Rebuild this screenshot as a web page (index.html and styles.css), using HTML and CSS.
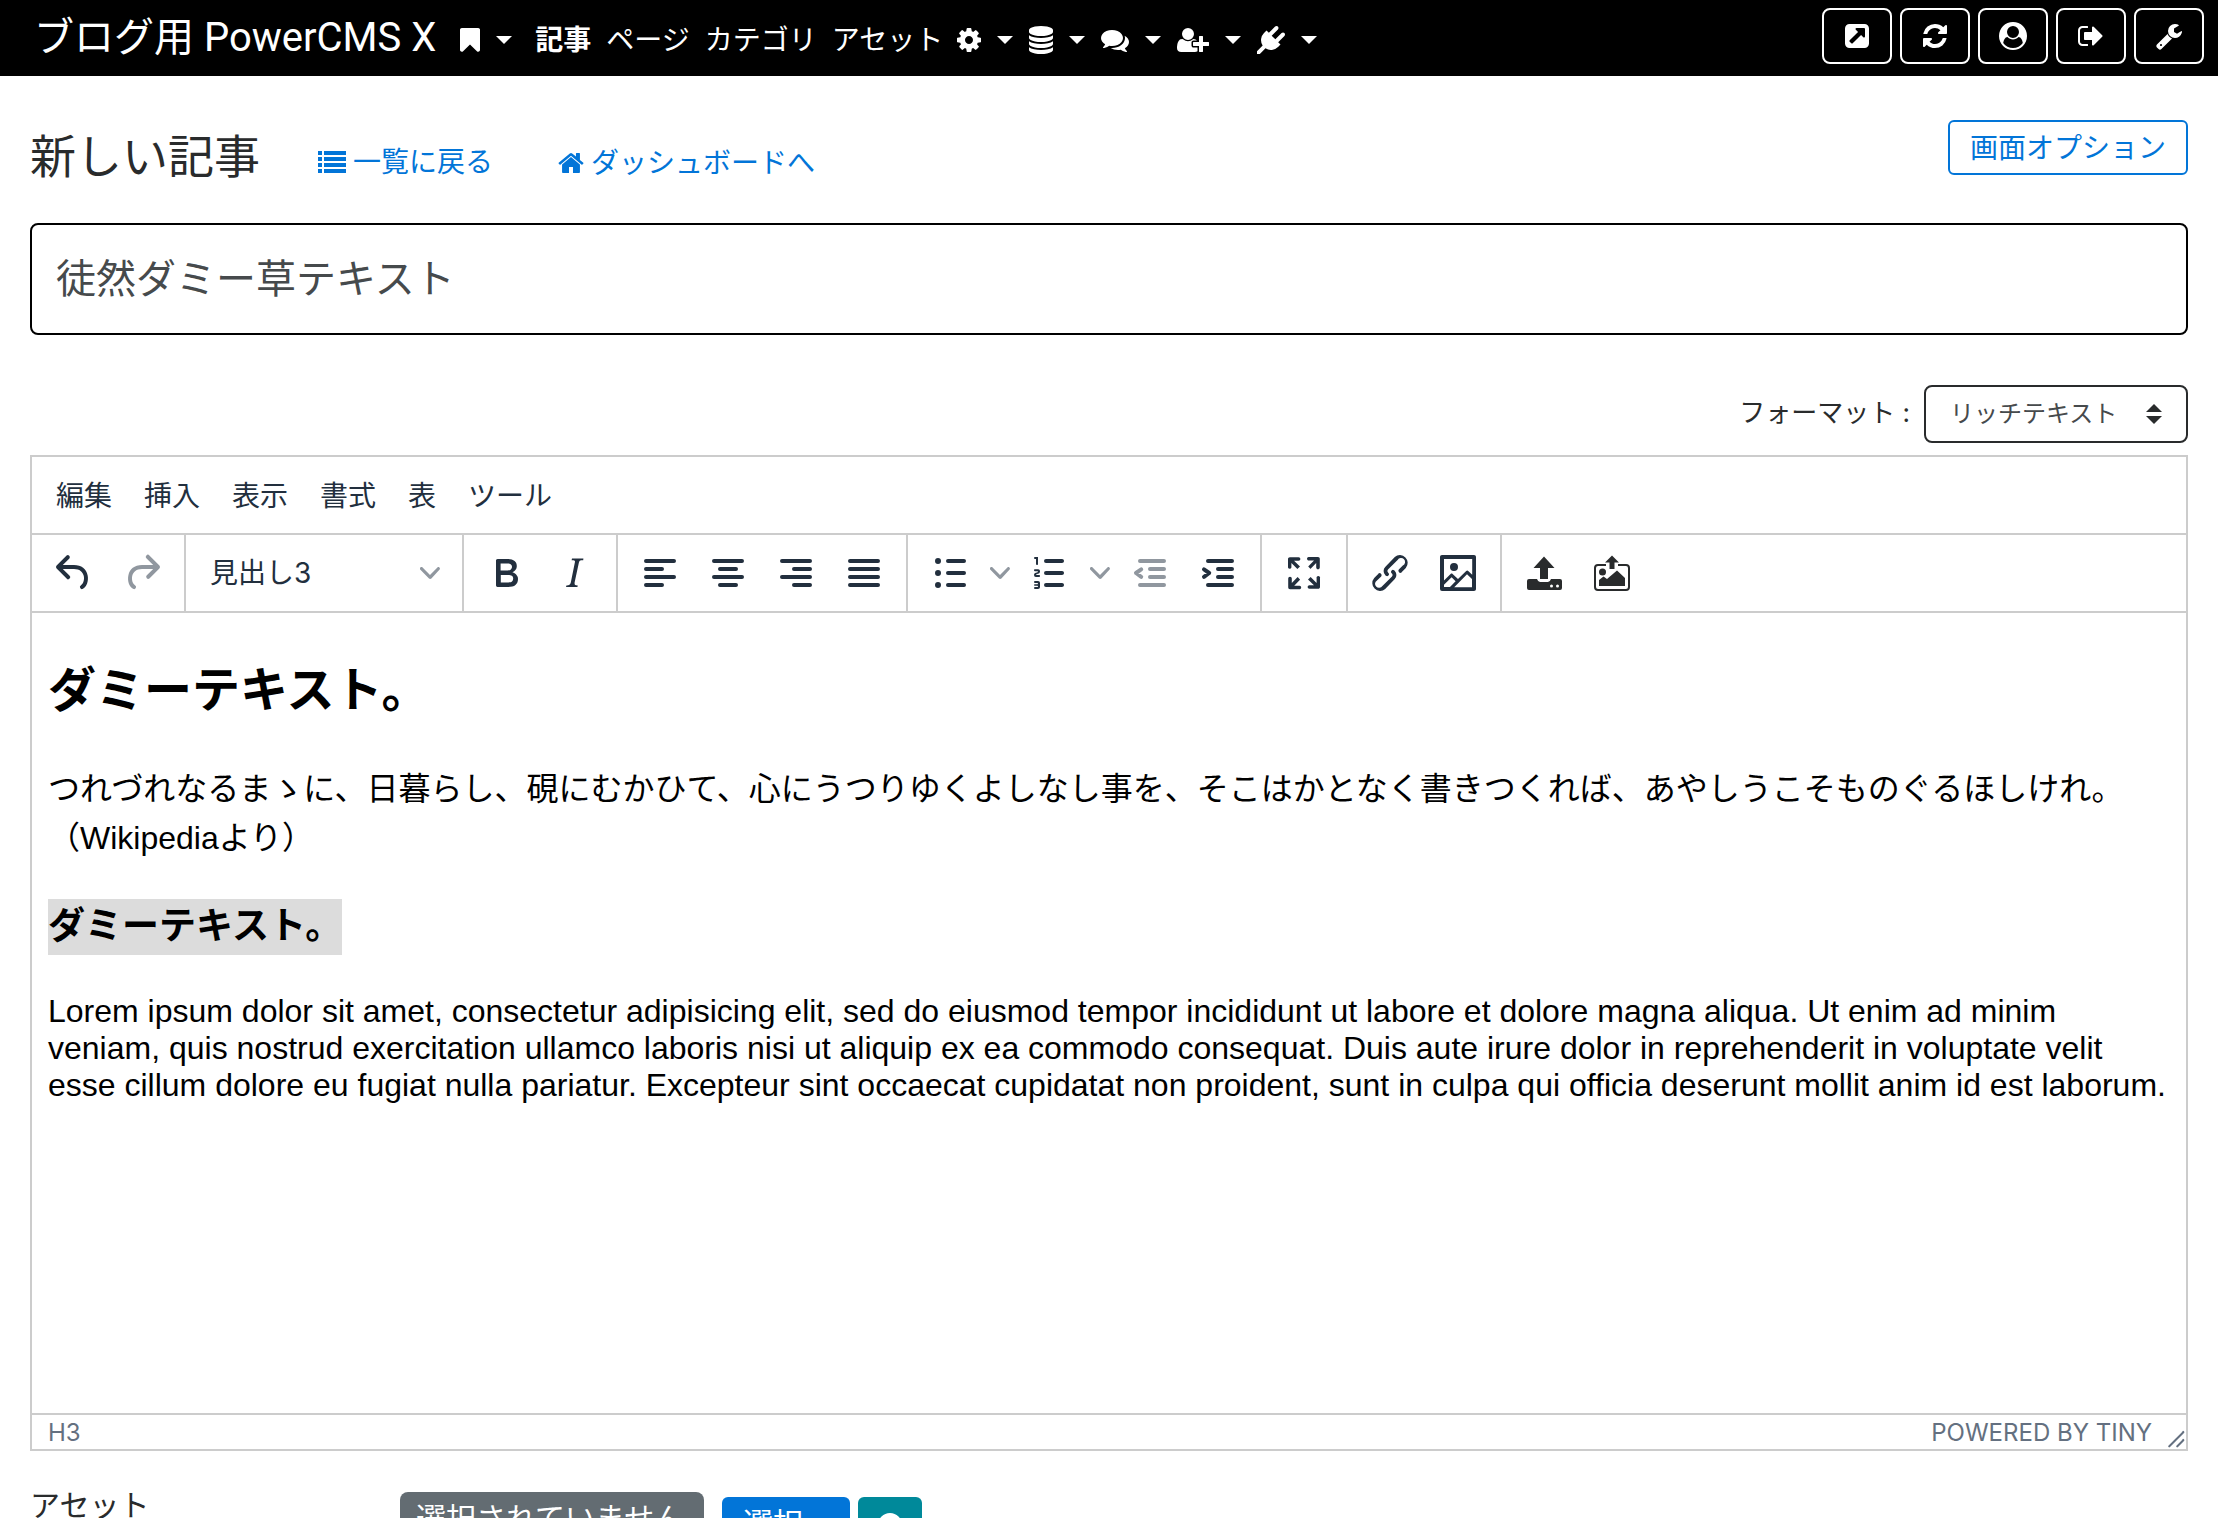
FILE: index.html
```html
<!DOCTYPE html>
<html lang="ja">
<head>
<meta charset="utf-8">
<meta name="viewport" content="width=device-width, initial-scale=1">
<title>新しい記事 - ブログ用 PowerCMS X</title>
<link rel="stylesheet" href="styles.css">
</head>
<body>
<header class="navbar">
  <a class="brand" href="#">ブログ用 PowerCMS X</a>
  <nav class="nav" aria-label="メインメニュー">
    <button class="nav-menu" type="button" aria-label="ブックマーク"><svg class="fa fa-narrow" viewBox="256 0 1280 1792"><path d="M1420 128q23 0 44 9 33 13 52.5 41t19.5 62v1289q0 34-19.5 62t-52.5 41q-19 8-44 8-48 0-83-32l-441-424-441 424q-36 33-83 33-23 0-44-9-33-13-52.5-41t-19.5-62v-1289q0-34 19.5-62t52.5-41q21-9 44-9h1048z"/></svg><span class="caret"></span></button>
    <div class="nav-links">
      <a class="nav-link active" href="#">記事</a>
      <a class="nav-link" href="#">ページ</a>
      <a class="nav-link" href="#">カテゴリ</a>
      <a class="nav-link" href="#">アセット</a>
    </div>
    <button class="nav-menu" type="button" aria-label="設定"><svg class="fa fa-mid" viewBox="128 0 1536 1792"><path d="M1152 896q0-106-75-181t-181-75-181 75-75 181 75 181 181 75 181-75 75-181zm512-109v222q0 12-8 23t-20 13l-185 28q-19 54-39 91 35 50 107 138 10 12 10 25t-9 23q-27 37-99 108t-94 71q-12 0-26-9l-138-108q-44 23-91 38-16 136-29 186-7 28-36 28h-222q-14 0-24.5-8.5t-11.5-21.5l-28-184q-49-16-90-37l-141 107q-10 9-25 9-14 0-25-11-126-114-165-168-7-10-7-23 0-12 8-23 15-21 51-66.5t54-70.5q-27-50-41-99l-183-27q-13-2-21-12.5t-8-23.5v-222q0-12 8-23t19-13l186-28q14-46 39-92-40-57-107-138-10-12-10-24 0-10 9-23 26-36 98.5-107.5t94.5-71.5q13 0 26 10l138 107q44-23 91-38 16-136 29-186 7-28 36-28h222q14 0 24.5 8.5t11.5 21.5l28 184q49 16 90 37l142-107q9-9 24-9 13 0 25 10 129 119 165 170 7 8 7 22 0 12-8 23-15 21-51 66.5t-54 70.5q26 50 41 98l183 28q13 2 21 12.5t8 23.5z"/></svg><span class="caret"></span></button>
    <button class="nav-menu" type="button" aria-label="データベース"><svg class="fa fa-mid" viewBox="128 0 1536 1792"><path d="M896 768q237 0 443-43t325-127v170q0 69-103 128t-280 93.500-385 34.500-385-34.500-280-93.500-103-128v-170q119 84 325 127t443 43zm0 768q237 0 443-43t325-127v170q0 69-103 128t-280 93.500-385 34.500-385-34.500-280-93.500-103-128v-170q119 84 325 127t443 43zm0-384q237 0 443-43t325-127v170q0 69-103 128t-280 93.500-385 34.500-385-34.500-280-93.500-103-128v-170q119 84 325 127t443 43zm0-1152q208 0 385 34.500t280 93.500 103 128v128q0 69-103 128t-280 93.500-385 34.500-385-34.500-280-93.500-103-128v-128q0-69 103-128t280-93.500 385-34.500z"/></svg><span class="caret"></span></button>
    <button class="nav-menu" type="button" aria-label="コミュニケーション"><svg class="fa" viewBox="0 0 1792 1792"><path d="M1408 768q0 139-94 257t-256.500 186.500-353.500 68.500q-86 0-176-16-124 88-278 128-36 9-86 16h-3q-11 0-20.500-8t-11.500-21q-1-3-1-6.500t.5-6.500 2-6l2.500-5 3.500-5.500 4-5 4.500-5 4-4.500q5-6 23-25t26-29.500 22.500-29 25-38.500 20.500-44q-124-72-195-177t-71-224q0-139 94-257t256.500-186.500 353.500-68.500 353.500 68.500 256.500 186.500 94 257zm384 256q0 120-71 224.500t-195 176.500q10 24 20.500 44t25 38.500 22.500 29 26 29.500 23 25q1 1 4 4.500t4.500 5 4 5 3.500 5.500l2.500 5 2 6 .5 6.500-1 6.500q-3 14-13 22t-22 7q-50-7-86-16-154-40-278-128-90 16-176 16-271 0-472-132 58 4 88 4 161 0 309-45t264-129q125-92 192-212t67-254q0-77-23-152 129 71 204 178t75 230z"/></svg><span class="caret"></span></button>
    <button class="nav-menu" type="button" aria-label="ユーザー"><svg class="fa fa-wide" viewBox="0 0 2048 1792"><path d="M704 896q-159 0-271.500-112.500t-112.500-271.500 112.500-271.500 271.500-112.500 271.500 112.500 112.500 271.500-112.500 271.500-271.500 112.500zm960 128h352q13 0 22.500 9.500t9.500 22.500v192q0 13-9.500 22.500t-22.500 9.500h-352v352q0 13-9.500 22.500t-22.500 9.500h-192q-13 0-22.500-9.500t-9.500-22.500v-352h-352q-13 0-22.500-9.500t-9.500-22.500v-192q0-13 9.500-22.500t22.500-9.500h352v-352q0-13 9.500-22.500t22.500-9.500h192q13 0 22.500 9.500t9.500 22.500v352zm-736 224q0 52 38 90t90 38h256v238q-68 50-171 50h-874q-121 0-194-69t-73-190q0-53 3.500-103.500t14-109 26.500-108.500 43-97.500 62-81 85.500-53.500 111.500-20q19 0 39 17 79 61 154.500 91.500t164.500 30.500 164.500-30.500 154.500-91.500q20-17 39-17 132 0 217 96h-223q-52 0-90 38t-38 90v192z"/></svg><span class="caret"></span></button>
    <button class="nav-menu" type="button" aria-label="プラグイン"><svg class="fa" viewBox="0 0 1792 1792"><path d="M1755 453q37 38 37 90.500t-37 90.500l-401 400 150 150-160 160q-163 163-389.500 186.500t-411.500-100.500l-362 362h-181v-181l362-362q-124-185-100.500-411.500t186.500-389.500l160-160 150 150 400-401q38-37 91-37t90 37 37 90.500-37 90.500l-400 401 234 234 401-400q38-37 91-37t90 37z"/></svg><span class="caret"></span></button>
  </nav>
  <div class="nav-tools">
    <button class="tool" type="button" aria-label="サイトを表示"><svg class="fa" viewBox="0 0 1792 1792"><path d="M1408 928v-480q0-26-19-45t-45-19h-480q-42 0-59 39-17 41 14 70l144 144-534 534q-19 19-19 45t19 45l102 102q19 19 45 19t45-19l534-534 144 144q18 19 45 19 12 0 25-5 39-17 39-59zm256-512v960q0 119-84.500 203.500t-203.500 84.500h-960q-119 0-203.500-84.500t-84.500-203.500v-960q0-119 84.500-203.500t203.500-84.500h960q119 0 203.500 84.500t84.500 203.500z"/></svg></button>
    <button class="tool" type="button" aria-label="再構築"><svg class="fa" viewBox="0 0 1792 1792"><path d="M1639 1056q0 5-1 7-64 268-268 434.500t-478 166.500q-146 0-282.500-55t-243.500-157l-129 129q-19 19-45 19t-45-19-19-45v-448q0-26 19-45t45-19h448q26 0 45 19t19 45-19 45l-137 137q71 66 161 102t187 36q134 0 250-65t186-179q11-17 53-117 8-23 30-23h192q13 0 22.500 9.500t9.500 22.500zm25-800v448q0 26-19 45t-45 19h-448q-26 0-45-19t-19-45 19-45l138-138q-148-137-349-137-134 0-250 65t-186 179q-11 17-53 117-8 23-30 23h-199q-13 0-22.500-9.500t-9.500-22.500v-7q65-268 270-434.500t480-166.500q146 0 284 55.500t245 156.500l130-129q19-19 45-19t45 19 19 45z"/></svg></button>
    <button class="tool" type="button" aria-label="アカウント"><svg class="fa" viewBox="0 0 1792 1792"><path d="M1523 1339q-22-155-87.500-257.500t-184.500-118.500q-67 74-159.500 115.500t-195.500 41.500-195.500-41.500-159.500-115.500q-119 16-184.500 118.500t-87.500 257.500q106 150 271 237.500t356 87.500 356-87.500 271-237.500zm-243-699q0-159-112.500-271.500t-271.500-112.500-271.500 112.500-112.500 271.500 112.500 271.500 271.500 112.500 271.500-112.500 112.500-271.500zm512 256q0 182-71 347.500t-190.500 286-285.500 191.500-349 71-349-71-285.500-191.500-190.500-286-71-347.500 71-348 191-286 286-191 348-71 348 71 286 191 191 286 71 348z"/></svg></button>
    <button class="tool" type="button" aria-label="ログアウト"><svg class="fa" viewBox="0 0 1792 1792"><path d="M704 1440q0 4 1 20t.5 26.500-3 23.500-10 19.500-20.500 6.500h-320q-119 0-203.500-84.500t-84.500-203.500v-704q0-119 84.500-203.500t203.500-84.500h320q13 0 22.500 9.500t9.500 22.500q0 4 1 20t.5 26.500-3 23.500-10 19.500-20.500 6.500h-320q-66 0-113 47t-47 113v704q0 66 47 113t113 47h312l11.500 1 11.500 3 8 5.500 7 9 2 13.500zm928-544q0 26-19 45l-544 544q-19 19-45 19t-45-19-19-45v-288h-448q-26 0-45-19t-19-45v-384q0-26 19-45t45-19h448v-288q0-26 19-45t45-19 45 19l544 544q19 19 19 45z"/></svg></button>
    <button class="tool" type="button" aria-label="ツール"><svg class="fa" viewBox="0 0 1792 1792"><path d="M448 1472q0-26-19-45t-45-19-45 19-19 45 19 45 45 19 45-19 19-45zm644-420l-682 682q-37 37-90 37-52 0-91-37l-106-108q-38-36-38-90 0-53 38-91l681-681q39 98 114.500 173.500t173.500 114.500zm634-435q0 39-23 106-47 134-164.500 217.500t-258.500 83.500q-185 0-316.500-131.500t-131.500-316.500 131.500-316.500 316.500-131.500q58 0 121.500 16.500t107.500 46.500q16 11 16 28t-16 28l-293 169v224l193 107q5-3 79-48.500t135.500-81 70.500-35.500q15 0 23.500 10t8.500 25z"/></svg></button>
  </div>
</header>

<main class="page">
  <div class="page-head">
    <div class="page-title">
      <h1>新しい記事</h1>
      <a class="head-link" href="#"><svg class="list-icon" viewBox="0 0 28 22"><path d="M0 0h4v4H0zM6 0h22v4H6zM0 6h4v4H0zM6 6h22v4H6zM0 12h4v4H0zM6 12h22v4H6zM0 18h4v4H0zM6 18h22v4H6z"/></svg>一覧に戻る</a>
      <a class="head-link" href="#"><svg class="home-icon" viewBox="90 250 1612 1290"><path d="M1472 992v480q0 26-19 45t-45 19h-384v-384h-256v384h-384q-26 0-45-19t-19-45v-480q0-1 .5-3t.5-3l575-474 575 474q1 2 1 6zm223-69l-62 74q-8 9-21 11h-3q-13 0-21-7l-692-577-692 577q-12 8-24 7-13-2-21-11l-62-74q-8-10-7-23.500t11-21.500l719-599q32-26 76-26t76 26l244 204v-195q0-14 9-23t23-9h192q14 0 23 9t9 23v408l219 182q10 8 11 21.500t-7 23.500z"/></svg>ダッシュボードへ</a>
    </div>
    <button class="btn-outline" type="button">画面オプション</button>
  </div>

  <input class="title-input" type="text" aria-label="タイトル" value="徒然ダミー草テキスト">

  <div class="format-row">
    <label for="format">フォーマット :</label>
    <div class="format-select">
      <select id="format"><option>リッチテキスト</option></select>
      <svg class="sort-icon" viewBox="0 0 16 20"><path d="M8 0l8 8H0zM8 20l8-8H0z"/></svg>
    </div>
  </div>

  <section class="editor" aria-label="本文">
    <div class="menubar" role="menubar">
      <button type="button">編集</button>
      <button type="button">挿入</button>
      <button type="button">表示</button>
      <button type="button">書式</button>
      <button type="button">表</button>
      <button type="button">ツール</button>
    </div>
    <div class="toolbar" role="toolbar">
      <div class="group">
        <button class="tb" type="button" aria-label="元に戻す"><svg viewBox="0 0 24 24"><path d="M6.400 8H12c3.700 0 6.200 2 6.800 5.100.6 2.700-.4 5.600-2.300 6.800a1 1 0 0 1-1-1.800c1.100-.6 1.800-2.700 1.400-4.600-.5-2.100-2.100-3.500-4.900-3.500H6.400l3.300 3.300a1 1 0 1 1-1.400 1.400l-5-5a1 1 0 0 1 0-1.400l5-5a1 1 0 0 1 1.400 1.400L6.400 8Z"/></svg></button>
        <button class="tb" type="button" aria-label="やり直す" disabled><svg viewBox="0 0 24 24"><path d="M17.600 10H12c-2.800 0-4.400 1.400-4.900 3.500-.4 2 .3 4 1.400 4.600a1 1 0 1 1-1 1.800c-2-1.200-2.900-4.100-2.300-6.800.6-3 3-5.100 6.800-5.100h5.600l-3.300-3.300a1 1 0 1 1 1.400-1.400l5 5a1 1 0 0 1 0 1.400l-5 5a1 1 0 0 1-1.400-1.400l3.300-3.300Z"/></svg></button>
      </div>
      <div class="group">
        <div class="block-select">
          <select aria-label="ブロック"><option>見出し3</option></select>
          <svg class="chevron" viewBox="0 0 10 10"><path d="M8.700 2.200c.3-.3.8-.3 1 0 .4.4.4.9 0 1.200L5.700 7.800c-.3.3-.9.3-1.200 0L.2 3.400a.8.8 0 0 1 0-1.200c.3-.3.8-.3 1.100 0L5 6l3.700-3.800Z"/></svg>
        </div>
      </div>
      <div class="group">
        <button class="tb" type="button" aria-label="太字"><svg viewBox="0 0 24 24"><path d="M7.800 19c-.3 0-.5 0-.6-.2l-.2-.5V5.700c0-.2 0-.4.2-.5l.6-.2h5c1.500 0 2.700.3 3.500 1 .7.6 1.100 1.400 1.100 2.500a3 3 0 0 1-.6 1.900c-.4.6-1 1-1.600 1.200.4.1.9.3 1.300.6s.8.7 1 1.200c.4.4.5 1 .5 1.600 0 1.300-.4 2.300-1.300 3-.8.7-2.100 1-3.800 1H7.800Zm5-8.300c.6 0 1.200-.1 1.600-.5.4-.3.6-.7.6-1.300 0-1.100-.8-1.700-2.300-1.700H9.300v3.500h3.400Zm.5 6c.7 0 1.300-.1 1.700-.4.4-.4.6-.9.6-1.500s-.2-1-.7-1.400c-.4-.3-1-.4-2-.4H9.400v3.800h4Z"/></svg></button>
        <button class="tb" type="button" aria-label="斜体"><svg viewBox="0 0 24 24"><path d="m16.700 4.700-.1.9h-.3c-.6 0-1 0-1.400.3-.3.3-.4.6-.5 1.100l-2.100 9.800v.6c0 .5.4.8 1.400.8h.2l-.2.8H8l.2-.8h.2c1.100 0 1.800-.5 2-1.500l2-9.800.1-.5c0-.6-.4-.8-1.400-.8h-.3l.2-.9h5.800Z"/></svg></button>
      </div>
      <div class="group">
        <button class="tb" type="button" aria-label="左揃え"><svg class="lines" viewBox="0 0 24 24"><path d="M5 6h14M5 10h8M5 14h14M5 18h8"/></svg></button>
        <button class="tb" type="button" aria-label="中央揃え"><svg class="lines" viewBox="0 0 24 24"><path d="M5 6h14M8 10h8M5 14h14M8 18h8"/></svg></button>
        <button class="tb" type="button" aria-label="右揃え"><svg class="lines" viewBox="0 0 24 24"><path d="M5 6h14M11 10h8M5 14h14M11 18h8"/></svg></button>
        <button class="tb" type="button" aria-label="両端揃え"><svg class="lines" viewBox="0 0 24 24"><path d="M5 6h14M5 10h14M5 14h14M5 18h14"/></svg></button>
      </div>
      <div class="group">
        <button class="tb" type="button" aria-label="箇条書き"><svg class="lines" viewBox="0 0 24 24"><path d="M11 6h8M11 12h8M11 18h8"/><path class="dots" d="M6 6h0M6 12h0M6 18h0"/></svg></button>
        <button class="tb-chevron" type="button" aria-label="箇条書きの種類"><svg class="chevron" viewBox="0 0 10 10"><path d="M8.700 2.200c.3-.3.8-.3 1 0 .4.4.4.9 0 1.200L5.700 7.800c-.3.3-.9.3-1.200 0L.2 3.400a.8.8 0 0 1 0-1.200c.3-.3.8-.3 1.100 0L5 6l3.700-3.800Z"/></svg></button>
        <button class="tb" type="button" aria-label="番号付き箇条書き"><svg viewBox="0 0 24 24"><path d="M10 17h8c.6 0 1 .4 1 1s-.4 1-1 1h-8a1 1 0 0 1 0-2Zm0-6h8c.6 0 1 .4 1 1s-.4 1-1 1h-8a1 1 0 0 1 0-2Zm0-6h8c.6 0 1 .4 1 1s-.4 1-1 1h-8a1 1 0 1 1 0-2ZM6 4v3.500c0 .3-.2.5-.5.5a.5.5 0 0 1-.5-.5V5h-.5a.5.5 0 0 1 0-1H6Zm-1 8.800.2.2h1.300c.3 0 .5.2.5.5s-.2.5-.5.5H4.900a1 1 0 0 1-.9-1V13c0-.4.3-.8.6-1l1.200-.4.2-.3a.2.2 0 0 0-.2-.2H4.500a.5.5 0 0 1-.5-.5c0-.3.2-.5.5-.5h1.600c.5 0 .9.4.9 1v.1c0 .4-.3.8-.6 1l-1.200.4-.2.3ZM7 17v2c0 .6-.4 1-1 1H4.500a.5.5 0 0 1 0-1h1.200c.2 0 .3-.1.3-.3 0-.2-.1-.3-.3-.3H4.400a.4.4 0 1 1 0-.8h1.300c.2 0 .3-.1.3-.3 0-.2-.1-.3-.3-.3H4.500a.5.5 0 1 1 0-1H6c.6 0 1 .4 1 1Z"/></svg></button>
        <button class="tb-chevron" type="button" aria-label="番号の種類"><svg class="chevron" viewBox="0 0 10 10"><path d="M8.700 2.200c.3-.3.8-.3 1 0 .4.4.4.9 0 1.200L5.700 7.800c-.3.3-.9.3-1.200 0L.2 3.400a.8.8 0 0 1 0-1.200c.3-.3.8-.3 1.100 0L5 6l3.700-3.800Z"/></svg></button>
        <button class="tb" type="button" aria-label="インデントを減らす" disabled><svg class="lines" viewBox="0 0 24 24"><path d="M7 6h12M12 10h7M12 14h7M7 18h12M7.600 10.200 5 12l2.600 1.900"/></svg></button>
        <button class="tb" type="button" aria-label="インデントを増やす"><svg class="lines" viewBox="0 0 24 24"><path d="M7 6h12M12 10h7M12 14h7M7 18h12M5 10.200 7.600 12 5 13.900"/></svg></button>
      </div>
      <div class="group">
        <button class="tb" type="button" aria-label="全画面表示"><svg viewBox="0 0 24 24"><path d="m15.300 10-1.200-1.300 2.900-3h-2.300a.9.9 0 1 1 0-1.700H19c.5 0 .9.4.9.9v4.400a.9.9 0 1 1-1.800 0V7l-2.900 3Zm0 4 3 3v-2.300a.9.9 0 1 1 1.700 0V19c0 .5-.4.9-.9.9h-4.400a.9.9 0 1 1 0-1.800H17l-3-2.900 1.300-1.200ZM10 15.400l-2.900 3h2.300a.9.9 0 1 1 0 1.700H5a.9.9 0 0 1-.9-.9v-4.400a.9.9 0 1 1 1.800 0V17l2.900-3 1.200 1.300ZM8.700 10 5.700 7v2.300a.9.9 0 0 1-1.700 0V5c0-.5.4-.9.9-.9h4.400a.9.9 0 0 1 0 1.800H7l3 2.900-1.300 1.200Z"/></svg></button>
      </div>
      <div class="group">
        <button class="tb" type="button" aria-label="リンク"><svg viewBox="0 0 24 24"><path d="M6.200 12.300a1 1 0 0 1 1.400 1.400l-2.100 2a2 2 0 1 0 2.700 2.800l4.800-4.800a1 1 0 0 0 0-1.400 1 1 0 1 1 1.400-1.300 2.900 2.900 0 0 1 0 4L9.600 20a3.900 3.900 0 0 1-5.500-5.500l2-2Zm11.600-.6a1 1 0 0 1-1.400-1.400l2-2a2 2 0 1 0-2.600-2.800L11 10.300a1 1 0 0 0 0 1.400A1 1 0 1 1 9.600 13a2.900 2.900 0 0 1 0-4L14.400 4a3.900 3.900 0 0 1 5.500 5.500l-2 2Z"/></svg></button>
        <button class="tb" type="button" aria-label="画像"><svg viewBox="0 0 24 24"><path d="m5 15.700 3.300-3.200c.3-.3.7-.3 1 0L12 15l4.100-4c.3-.4.8-.4 1 0l2 1.900V5H5v10.700ZM5 18V19h3l2.800-2.900-2-2L5 17.900Zm14-3-2.500-2.400-6.400 6.500H19v-4ZM4 3h16c.6 0 1 .4 1 1v16c0 .6-.4 1-1 1H4a1 1 0 0 1-1-1V4c0-.6.4-1 1-1Zm6 8a2 2 0 1 0 0-4 2 2 0 0 0 0 4Z"/></svg></button>
      </div>
      <div class="group">
        <button class="tb tb-dark" type="button" aria-label="ファイルをアップロード"><svg viewBox="0 0 48 48"><path fill-rule="evenodd" d="M24 7.500 34.500 19H28v11h-8V19h-6.500ZM9 30h8q1 3 3 3h8q2 0 3-3h9q2 0 2 2v7q0 2-2 2H9q-2 0-2-2v-7q0-2 2-2Zm21 7a1.500 1.500 0 1 0 3 0 1.500 1.500 0 1 0-3 0Zm6 0a1.500 1.500 0 1 0 3 0 1.500 1.500 0 1 0-3 0Z"/></svg></button>
        <button class="tb tb-dark" type="button" aria-label="画像をアップロード"><svg viewBox="0 0 48 48"><path d="M24 6.500 31 13.500H26.500V20h-5V13.500H17Z"/><path d="M11 37v-6l4.500-3.500L19 30l10-8.500 8 7.500v8Z"/><circle cx="14.500" cy="23" r="3.500"/><path class="frame" d="M18 16H10q-3 0-3 3v19q0 3 3 3h28q3 0 3-3V19q0-3-3-3h-8"/></svg></button>
      </div>
    </div>
    <div class="edit-area" contenteditable="true" spellcheck="false">
      <h2>ダミーテキスト。</h2>
      <p class="ja">つれづれなるまゝに、日暮らし、硯にむかひて、心にうつりゆくよしなし事を、そこはかとなく書きつくれば、あやしうこそものぐるほしけれ。（Wikipediaより）</p>
      <h3><span class="selected">ダミーテキスト。</span></h3>
      <p>Lorem ipsum dolor sit amet, consectetur adipisicing elit, sed do eiusmod tempor incididunt ut labore et dolore magna aliqua. Ut enim ad minim veniam, quis nostrud exercitation ullamco laboris nisi ut aliquip ex ea commodo consequat. Duis aute irure dolor in reprehenderit in voluptate velit esse cillum dolore eu fugiat nulla pariatur. Excepteur sint occaecat cupidatat non proident, sunt in culpa qui officia deserunt mollit anim id est laborum.</p>
    </div>
    <footer class="statusbar">
      <span>H3</span>
      <a class="powered" href="#">POWERED BY TINY</a>
      <svg class="resize" viewBox="0 0 10 10"><path d="M8.100 1.100A.5.5 0 1 1 9 2L2 9a.5.5 0 1 1-.7-.7l7-7ZM8.100 5.100A.5.5 0 1 1 9 6l-3 3a.5.5 0 1 1-.7-.7l3-3Z"/></svg>
    </footer>
  </section>

  <div class="asset-row">
    <div class="asset-label">アセット</div>
    <span class="badge">選択されていません</span>
    <button class="btn btn-primary" type="button">選択...</button>
    <button class="btn btn-help" type="button" aria-label="ヘルプ"><svg class="fa" viewBox="0 0 1792 1792"><path fill-rule="evenodd" d="M896 128a768 768 0 1 1 0 1536 768 768 0 1 1 0-1536ZM800 1216v192h192v-192ZM560 680l130 100q90-120 200-120 110 0 110 80 0 60-90 110-120 60-120 200v50h202v-40q0-60 80-110 150-80 150-230 0-260-320-260-220 0-342 220Z"/></svg></button>
  </div>
</main>
</body>
</html>
```

FILE: styles.css
```css
:root {
  --ui: "Inter", "Noto Sans CJK JP", sans-serif;
  --text: #292b2c;
  --blue: #0275d8;
  --line: #ccc;
  --tiny: #222f3e;
}

*, *::before, *::after { box-sizing: border-box; }

body {
  margin: 0;
  height: 100vh;
  overflow: hidden;
  display: flex;
  flex-direction: column;
  background: #fff;
  color: var(--text);
  font: 28px/42px var(--ui);
}

button, input, select { margin: 0; font: inherit; color: inherit; }
button { padding: 0; border: 0; background: none; }
select { appearance: none; border: 0; background: none; }
a { color: inherit; text-decoration: none; }
svg { display: block; fill: currentColor; flex: none; }

.fa { width: 28px; height: 28px; }
.fa-narrow { width: 20px; }
.fa-mid { width: 24px; }
.fa-wide { width: 32px; }

/* Top bar */
.navbar {
  flex: none;
  display: flex;
  align-items: center;
  height: 76px;
  padding: 0 14px 0 34px;
  background: #000;
  color: #fff;
}
.brand {
  font-family: "Roboto", "Noto Sans CJK JP", sans-serif;
  font-size: 40px;
  line-height: 60px;
  white-space: nowrap;
}
.nav { display: flex; align-items: center; gap: 16px; margin-left: 24px; padding-top: 4px; }
.nav-menu { display: flex; align-items: center; gap: 16px; height: 42px; }
.caret {
  border: 8px solid transparent;
  border-top-color: currentColor;
  border-bottom: 0;
}
.nav-links { display: flex; gap: 15px; margin: 0 -2px 0 7px; }
.nav-link { white-space: nowrap; }
.nav-link.active { font-weight: 700; }
.nav-tools { display: flex; gap: 8px; margin-left: auto; padding-bottom: 4px; }
.tool {
  display: grid;
  place-items: center;
  width: 70px;
  height: 56px;
  border: 2px solid #fff;
  border-radius: 8px;
}

/* Page */
.page {
  flex: 1;
  min-height: 0;
  overflow: hidden;
  padding: 44px 30px 0;
}
.page-head { display: flex; justify-content: space-between; align-items: flex-start; }
.page-title { display: flex; align-items: baseline; height: 103px; }
.page-title h1 { margin: 0; font-size: 46px; line-height: 72px; font-weight: 400; }
.head-link { display: flex; align-items: center; gap: 7px; margin-left: 58px; color: var(--blue); }
.head-link + .head-link { margin-left: 65px; }
.list-icon { width: 28px; height: 22px; }
.home-icon { width: 26px; height: 20px; }
.btn-outline {
  height: 55px;
  padding: 0 20px;
  border: 2px solid var(--blue);
  border-radius: 6px;
  color: var(--blue);
}
.title-input {
  display: block;
  width: 100%;
  height: 112px;
  padding: 0 24px 6px;
  border: 2px solid #000;
  border-radius: 8px;
  background: #fff;
  color: #464a4c;
  font-size: 40px;
}
.format-row {
  display: flex;
  justify-content: flex-end;
  align-items: center;
  gap: 14px;
  margin: 50px 0 12px;
  font-size: 26px;
}
.format-row label { padding-bottom: 2px; }
.format-select, .block-select { display: grid; align-items: center; }
.format-select > *, .block-select > * { grid-area: 1 / 1; }
.format-select select {
  width: 264px;
  height: 58px;
  padding: 0 24px;
  border: 2px solid var(--text);
  border-radius: 8px;
  color: #464a4c;
  font-size: 24px;
}
.sort-icon { width: 16px; height: 20px; justify-self: end; margin-right: 26px; pointer-events: none; }

/* Rich text editor */
.editor { border: 2px solid var(--line); color: var(--tiny); }
.menubar {
  display: flex;
  align-items: center;
  gap: 32px;
  height: 78px;
  padding: 0 24px;
}
.toolbar { display: flex; border: solid var(--line); border-width: 2px 0; height: 80px; margin-top: -2px; }
.group { display: flex; align-items: center; padding: 0 8px; border-right: 2px solid var(--line); }
.group:last-child { border-right: 0; }
.tb { display: grid; place-items: center; width: 68px; height: 68px; }
.tb svg { width: 48px; height: 48px; }
.tb:disabled { color: #90979f; }
.tb-dark { color: var(--text); }
.tb-chevron { display: grid; place-items: center; width: 32px; height: 68px; }
.chevron { width: 20px; height: 20px; color: #90979f; }
.lines { fill: none; stroke: currentColor; stroke-width: 2; stroke-linecap: round; stroke-linejoin: round; }
.dots { stroke-width: 3; }
.frame { fill: none; stroke: currentColor; stroke-width: 2; }
.block-select select { width: 260px; height: 68px; padding: 0 16px; }
.block-select .chevron { justify-self: end; margin-right: 14px; pointer-events: none; }

.edit-area {
  height: 800px;
  padding: 42px 16px 0;
  outline: 0;
  color: #000;
  font: 32px/37px "Liberation Sans", "Noto Sans CJK JP", sans-serif;
  text-spacing-trim: space-all;
}
.edit-area h2 { margin: 0 0 38px; font-size: 48px; line-height: 72px; }
.edit-area p { margin: 0 0 36px; }
.edit-area .ja { line-height: 49px; }
.edit-area h3 { display: flex; margin: 0 0 38px; font-size: 37px; line-height: 56px; }
.selected { background: #dcdcdc; }

.statusbar {
  display: flex;
  align-items: center;
  height: 36px;
  padding: 2px 0 0 16px;
  border-top: 2px solid var(--line);
  color: #647080;
  font-size: 24px;
  line-height: 32px;
}
.powered { margin-left: auto; }
.resize { width: 20px; height: 20px; margin-left: 14px; align-self: flex-end; }

/* Asset field */
.asset-row { display: flex; align-items: flex-start; margin-top: 41px; font-size: 30px; }
.asset-label { width: 370px; margin-top: -8px; }
.badge {
  width: 304px;
  height: 56px;
  padding: 0 16px;
  border-radius: 8px;
  background: #636c72;
  color: #fff;
  line-height: 52px;
  white-space: nowrap;
}
.btn { height: 56px; margin-top: 5px; border-radius: 6px; color: #fff; }
.btn-primary { width: 128px; margin-left: 18px; padding-bottom: 4px; background: var(--blue); }
.btn-help { display: grid; place-items: center; width: 64px; margin-left: 8px; background: #00899a; }
```
